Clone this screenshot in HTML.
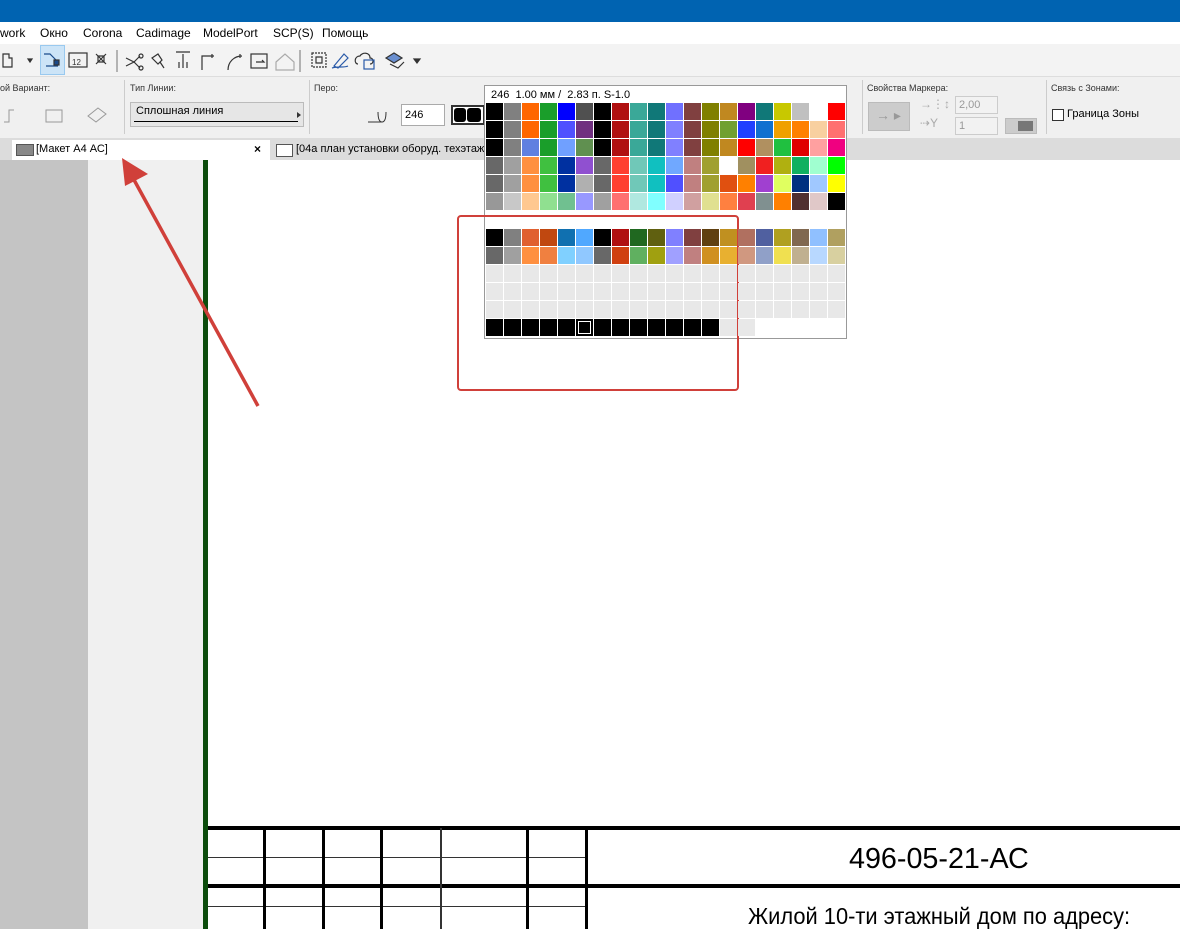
<!DOCTYPE html>
<html><head><meta charset="utf-8"><style>
*{margin:0;padding:0;box-sizing:border-box}
body{width:1180px;height:929px;overflow:hidden;position:relative;background:#fff;font-family:"Liberation Sans","DejaVu Sans",sans-serif;font-size:12px;color:#000}
.a{position:absolute}
.t{position:absolute;white-space:nowrap}
</style></head><body>
<div class="a" style="left:0;top:0;width:1180px;height:22px;background:#0063b1"></div>
<div class="a" style="left:0;top:22px;width:1180px;height:22px;background:#fff"></div>
<div class="t" style="left:0;top:26px;font-size:12px">work</div>
<div class="t" style="left:40px;top:26px">Окно</div>
<div class="t" style="left:83px;top:26px">Corona</div>
<div class="t" style="left:136px;top:26px">Cadimage</div>
<div class="t" style="left:203px;top:26px">ModelPort</div>
<div class="t" style="left:273px;top:26px">SCP(S)</div>
<div class="t" style="left:322px;top:26px">Помощь</div>
<div class="a" style="left:0;top:44px;width:1180px;height:32px;background:#f3f3f3"></div>
<div class="a" style="left:40px;top:45px;width:25px;height:30px;background:#cce4f7;border:1px solid #99c9ef"></div>
<svg class="a" style="left:0;top:46px" width="430" height="28" viewBox="0 0 430 28" fill="none" stroke="#333" stroke-width="1.2">
<path d="M3 8h6v4h3v9H3z"/><path d="M28 13l4 0-2 3z" fill="#333"/>
<path d="M44 8h6l6 6M46 20h12" stroke="#1a4a8a"/><rect x="54" y="14" width="5" height="5" fill="#1a4a8a"/>
<rect x="69" y="7" width="18" height="14"/><text x="72" y="19" font-size="8" fill="#333" stroke="none">12</text>
<path d="M96 8l10 10M106 8l-10 10M98 10h6v6h-6z"/>
<path d="M117 4v22" stroke="#888"/>
<path d="M126 12l8 4-8 4M134 16l6-6M134 16l6 6"/><circle cx="141" cy="10" r="2"/><circle cx="141" cy="22" r="2"/>
<path d="M152 12l6-4 4 6-4 4zM160 16l4 6"/>
<path d="M176 6h14M183 8v14M179 22v-6M187 22v-6"/>
<path d="M202 24V10h12M212 8v4"/>
<path d="M228 24c0-8 6-14 14-14M240 8v4"/>
<rect x="251" y="8" width="16" height="14"/><path d="M256 16h8l-2-2"/>
<path d="M276 16l9-8 9 8v8h-18z" stroke="#aaa"/>
<path d="M300 4v22" stroke="#888"/>
<rect x="312" y="7" width="14" height="14" stroke-dasharray="2 1"/><path d="M316 11h6v6h-6z"/>
<path d="M334 20l10-12 4 4-10 10zM332 22c6-2 12 0 16-2" stroke="#2a5aa8"/>
<path d="M358 18c-4 0-4-8 2-8 2-4 10-4 10 2 4 0 4 6 0 6" /><rect x="364" y="14" width="10" height="9" stroke="#2a5aa8"/>
<path d="M386 12l8-5 8 5-8 5z" fill="#6a8fd0"/><path d="M390 18l8 4 6-6"/>
<path d="M414 13l6 0-3 4z" fill="#333"/>
</svg>
<div class="a" style="left:0;top:76px;width:1180px;height:62px;background:#f0f0f0;border-top:1px solid #ddd"></div>
<div class="a" style="left:124px;top:80px;width:1px;height:54px;background:#ccc"></div>
<div class="a" style="left:309px;top:80px;width:1px;height:54px;background:#ccc"></div>
<div class="a" style="left:862px;top:80px;width:1px;height:54px;background:#ccc"></div>
<div class="a" style="left:1046px;top:80px;width:1px;height:54px;background:#ccc"></div>
<div class="t" style="left:0;top:83px;font-size:9px;color:#333">ой Вариант:</div>
<div class="t" style="left:130px;top:83px;font-size:9px;color:#333">Тип Линии:</div>
<div class="t" style="left:314px;top:83px;font-size:9px;color:#333">Перо:</div>
<div class="t" style="left:867px;top:83px;font-size:9px;color:#333">Свойства Маркера:</div>
<div class="t" style="left:1051px;top:83px;font-size:9px;color:#333">Связь с Зонами:</div>
<svg class="a" style="left:0;top:100px" width="120" height="30" fill="none" stroke="#999"><path d="M4 22h5V10h5"/><rect x="46" y="10" width="16" height="12"/><path d="M88 16l10-8 8 6-10 8z"/></svg>
<div class="a" style="left:130px;top:102px;width:174px;height:25px;background:#e6e6e6;border:1px solid #bbb"></div>
<div class="t" style="left:136px;top:105px;font-size:11px">Сплошная линия</div>
<div class="a" style="left:134px;top:121px;width:164px;height:1px;background:#000"></div>
<div class="a" style="left:297px;top:112px;border-left:4px solid #333;border-top:3px solid transparent;border-bottom:3px solid transparent"></div>
<svg class="a" style="left:366px;top:104px" width="28" height="22" fill="none" stroke="#333"><path d="M2 18h14M16 18c-3 0-4-4-4-10M16 18c3 0 4-4 4-10"/></svg>
<div class="a" style="left:401px;top:104px;width:44px;height:22px;background:#fff;border:1px solid #aaa"></div>
<div class="t" style="left:405px;top:109px;font-size:11px">246</div>
<div class="a" style="left:451px;top:105px;width:34px;height:20px;border:2px solid #333;background:#fff"></div>
<div class="a" style="left:454px;top:108px;width:12px;height:14px;background:#000;border-radius:3px"></div>
<div class="a" style="left:467px;top:108px;width:14px;height:14px;background:#000;border-radius:3px"></div>
<div class="a" style="left:868px;top:102px;width:42px;height:29px;background:#ccc;border:1px solid #bbb"></div>
<div class="t" style="left:876px;top:107px;color:#999;font-size:14px">→ ▸</div>
<div class="t" style="left:920px;top:97px;color:#aaa;font-size:12px">→⋮↕</div>
<div class="t" style="left:920px;top:116px;color:#aaa;font-size:12px">⇢Y</div>
<div class="a" style="left:955px;top:96px;width:43px;height:18px;border:1px solid #ccc;background:#f2f2f2"></div>
<div class="t" style="left:959px;top:99px;color:#999;font-size:11px">2,00</div>
<div class="a" style="left:955px;top:117px;width:43px;height:18px;border:1px solid #ccc;background:#f2f2f2"></div>
<div class="t" style="left:959px;top:120px;color:#999;font-size:11px">1</div>
<div class="a" style="left:1005px;top:118px;width:32px;height:16px;background:#ccc;border:1px solid #bbb"></div>
<div class="a" style="left:1018px;top:121px;width:15px;height:10px;background:#777"></div>
<div class="a" style="left:1052px;top:109px;width:12px;height:12px;border:1px solid #333;background:#fff"></div>
<div class="t" style="left:1067px;top:108px;font-size:11px">Граница Зоны</div>
<div class="a" style="left:0;top:138px;width:1180px;height:22px;background:#dcdcdc"></div>
<div class="a" style="left:12px;top:140px;width:258px;height:20px;background:#fff"></div>
<div class="a" style="left:16px;top:144px;width:18px;height:12px;background:#888;border:1px solid #555"></div>
<div class="t" style="left:36px;top:143px;font-size:11px">[Макет А4 АС]</div>
<div class="t" style="left:254px;top:142px;font-size:12px;font-weight:bold">×</div>
<div class="a" style="left:276px;top:144px;width:17px;height:13px;background:#fff;border:1px solid #555"></div>
<div class="t" style="left:296px;top:143px;font-size:11px">[04а план установки оборуд. техэтаж</div>
<div class="a" style="left:0;top:160px;width:88px;height:769px;background:#c4c4c4"></div>
<div class="a" style="left:88px;top:160px;width:115px;height:769px;background:#f0f0f0"></div>
<div class="a" style="left:203px;top:160px;width:5px;height:769px;background:#0d4d0d"></div>
<div class="a" style="left:208px;top:826px;width:972px;height:4px;background:#000"></div>
<div class="a" style="left:208px;top:884px;width:972px;height:4px;background:#000"></div>
<div class="a" style="left:208px;top:857px;width:378px;height:1px;background:#333"></div>
<div class="a" style="left:208px;top:906px;width:378px;height:1px;background:#333"></div>
<div class="a" style="left:263px;top:828px;width:3px;height:101px;background:#000"></div>
<div class="a" style="left:322px;top:828px;width:3px;height:101px;background:#000"></div>
<div class="a" style="left:380px;top:828px;width:3px;height:101px;background:#000"></div>
<div class="a" style="left:440px;top:828px;width:2px;height:101px;background:#333"></div>
<div class="a" style="left:526px;top:828px;width:3px;height:101px;background:#000"></div>
<div class="a" style="left:585px;top:828px;width:3px;height:101px;background:#000"></div>
<div class="t" style="left:849px;top:843px;font-size:29px;transform:scaleX(.99);transform-origin:left">496-05-21-АС</div>
<div class="t" style="left:748px;top:903px;font-size:23px;transform:scaleX(.95);transform-origin:left">Жилой 10-ти этажный дом по адресу:</div>
<div id="pal" class="a" style="left:484px;top:85px;width:363px;height:254px;background:#fff;border:1px solid #999"></div>
<div class="t" style="left:491px;top:89px;font-size:11px">246&nbsp; 1.00 мм /&nbsp; 2.83 п. S-1.0</div>
<div class="a" style="left:457px;top:215px;width:282px;height:176px;border:2px solid #d0403a;border-radius:4px"></div>
<svg class="a" style="left:0;top:0" width="1180" height="929"><line x1="258" y1="406" x2="133" y2="178" stroke="#d0403a" stroke-width="3.5"/><path d="M122 158L125 186 148 174z" fill="#d0403a"/></svg>
<script>
var R=[
"000 808080 ff6600 1a9e2a 0000ff 505050 000 b01010 3aa898 107878 7070ff 804040 808000 c08820 800080 107878 c8c800 c0c0c0 fff ff0000",
"000 808080 ff6600 1a9e2a 5050ff 703080 000 b01010 3aa898 107878 8080ff 804040 808000 70a030 2040ff 1070d0 f0a000 ff8000 f8d0a0 ff7070",
"000 808080 6080e0 1a9e2a 70a0ff 609050 000 b01010 3aa898 107878 8080ff 804040 808000 c08820 ff0000 b09060 20c040 e00000 ffa0a0 f00080",
"686868 a0a0a0 ff9040 40c040 0030a0 9050d0 686868 ff4030 70c8b8 10c0c0 70a8ff c08080 a0a030 fff a09060 f02020 b0b010 10b060 a0ffd0 00ff00",
"686868 a0a0a0 ff9040 40c040 0030a0 b0b0b0 686868 ff4030 70c8b8 10c0c0 5050ff c08080 a0a030 e05010 ff8000 a040d0 e0ff60 003080 a0c8ff ffff00",
"989898 c8c8c8 ffc890 90e090 70c090 9898ff a0a0a0 ff7070 b0e8e0 80ffff d0d0ff d0a0a0 e0e090 ff8040 e04050 809090 ff8000 503030 e0c8c8 000",
"",
"000 808080 e06030 c04810 1070b0 50a8ff 000 b01010 206820 606010 8080ff 804040 604010 c09020 b07060 5060a0 b0a020 806850 90c0ff b0a060",
"686868 a0a0a0 ff9040 f08040 80d0ff 90c8ff 686868 d04010 60b060 a0a010 a0a0ff c08080 d09020 e8b030 d09880 90a0c8 f0e050 c0b090 b8d8ff d8d0a0",
"e8e8e8 ".repeat(20).trim(),"e8e8e8 ".repeat(20).trim(),"e8e8e8 ".repeat(20).trim(),
"000 000 000 000 000 000 000 000 000 000 000 000 000 e8e8e8 e8e8e8"];
var h='';
R.forEach(function(r,i){if(!r)return;r.split(' ').forEach(function(c,j){
var s='left:'+(486+j*18)+'px;top:'+(103+i*18)+'px;width:17px;height:17px;background:#'+c;
if(i==12&&j==5)s+=';outline:1px solid #fff;outline-offset:-3px';
h+='<div class="a" style="'+s+'"></div>';});});
document.body.insertAdjacentHTML('beforeend',h);
</script>
</body></html>
